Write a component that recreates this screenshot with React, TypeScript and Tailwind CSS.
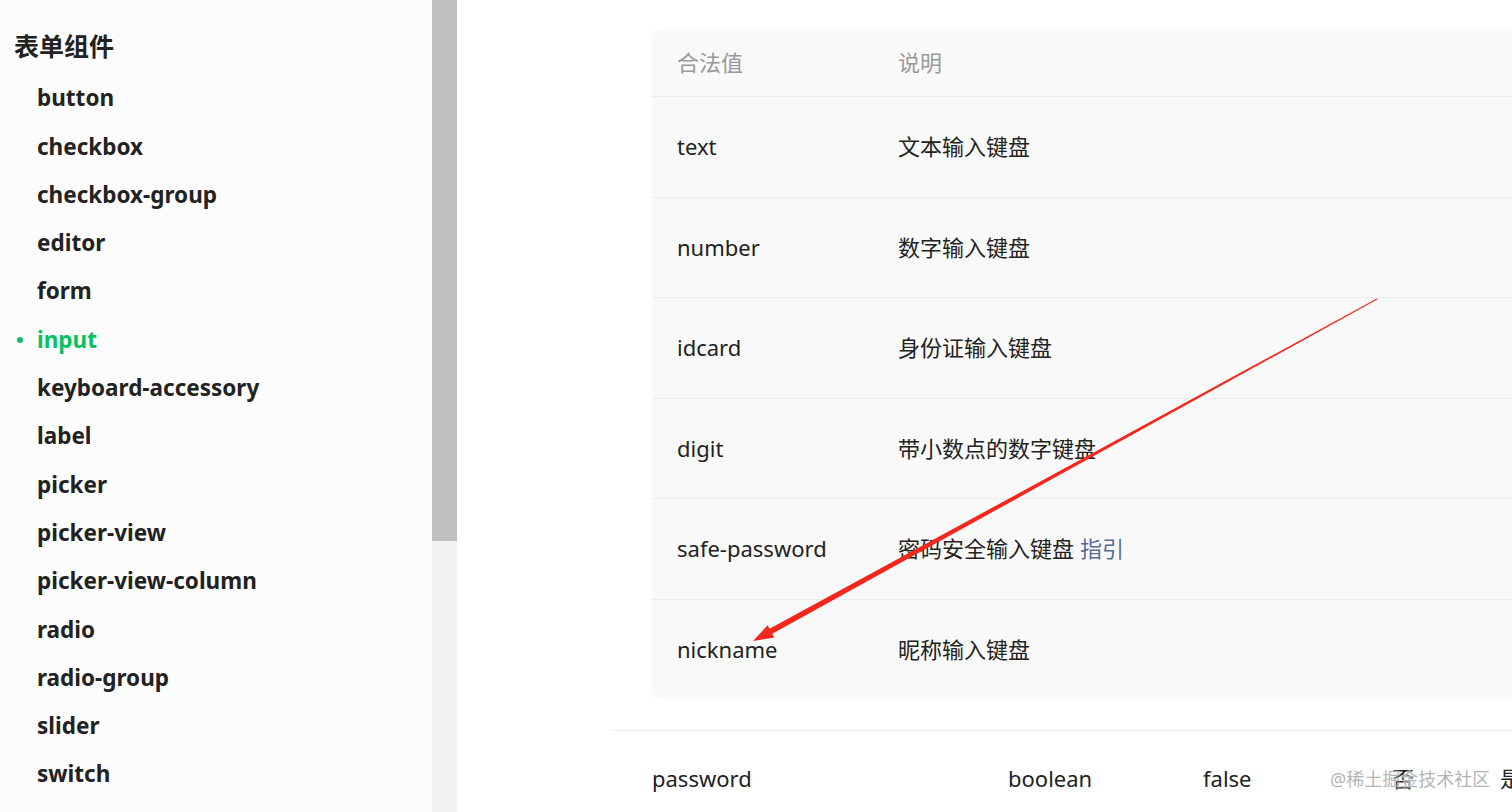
const navItems = [
  "button",
  "checkbox",
  "checkbox-group",
  "editor",
  "form",
  "input",
  "keyboard-accessory",
  "label",
  "picker",
  "picker-view",
  "picker-view-column",
  "radio",
  "radio-group",
  "slider",
  "switch",
];

const rows: { value: string; desc: string; link?: string }[] = [
  { value: "text", desc: "文本输入键盘" },
  { value: "number", desc: "数字输入键盘" },
  { value: "idcard", desc: "身份证输入键盘" },
  { value: "digit", desc: "带小数点的数字键盘" },
  { value: "safe-password", desc: "密码安全输入键盘", link: "指引" },
  { value: "nickname", desc: "昵称输入键盘" },
];

const font = "font-['Segoe_UI','Noto_Sans','Noto_Sans_CJK_SC',sans-serif]";

const Sidebar = () => {
  return (
    <aside className="w-[432px] shrink-0 bg-[#fcfcfc] pt-[28px]">
      <h2 className="pl-[14px] h-[46px] text-[25px] font-bold leading-[36px] text-[#222]">表单组件</h2>
      <ul>
        {navItems.map((item) => {
          const active = item === "input";
          return (
            <li key={item} className="relative h-[48.3px] flex items-center pl-[37px]">
              {active && <span className="absolute left-[17px] top-1/2 -translate-y-1/2 w-[6px] h-[6px] rounded-full bg-[#07c160]" />}
              <span className={`text-[22.5px] font-bold ${active ? "text-[#07c160]" : "text-[#222]"}`}>{item}</span>
            </li>
          );
        })}
      </ul>
    </aside>
  );
};

const Scrollbar = () => (
  <div className="w-[25px] shrink-0 bg-[#f1f1f1] flex flex-col">
    <div className="h-[541px] bg-[#c1c1c1]" />
  </div>
);

const Arrow = () => (
  <svg className="absolute left-0 top-0 pointer-events-none" width="1512" height="812">
    <polygon points="1377.2,299.4 1376.8,298.6 769,629 771.8,634" fill="#f5261b" />
    <polygon points="753,641 774.4,637.5 767.6,625.3" fill="#f5261b" />
  </svg>
);

export default function App() {
  return (
    <div className={`relative w-[1512px] h-[812px] overflow-hidden flex bg-white ${font}`}>
      <Sidebar />
      <Scrollbar />
      <main className="flex-1 min-w-0 overflow-hidden pl-[155px] pt-[29px]">
        <div className="ml-[40px] w-[1000px] bg-[#f9f9f9] rounded-l-[8px]">
          <div className="h-[67px] flex items-center text-[22px] text-[#999]">
            <span className="w-[246px] shrink-0 pl-[25px]">合法值</span>
            <span>说明</span>
          </div>
          {rows.map((r) => (
            <div key={r.value} className="h-[100.5px] flex items-center border-t border-[#ececec] text-[22px] text-[#222]">
              <span className="w-[246px] shrink-0 pl-[25px]">{r.value}</span>
              <span>
                {r.desc}
                {r.link && <span className="ml-[6px] text-[#576b95]">{r.link}</span>}
              </span>
            </div>
          ))}
        </div>
        <div className="mt-[31px] w-[1000px] border-t border-[#ececec] h-[96px] flex items-center pl-[40px] text-[22px] text-[#222]">
          <span className="w-[356px] shrink-0">password</span>
          <span className="w-[195px] shrink-0">boolean</span>
          <span className="w-[189px] shrink-0">false</span>
          <span className="w-[108px] shrink-0">否</span>
          <span className="shrink-0">是</span>
        </div>
      </main>
      <span className="absolute left-[1330px] top-[766px] text-[18px] text-[#aaa]/90 [text-shadow:0_0_2px_#fff]">@稀土掘金技术社区</span>
      <Arrow />
    </div>
  );
}
